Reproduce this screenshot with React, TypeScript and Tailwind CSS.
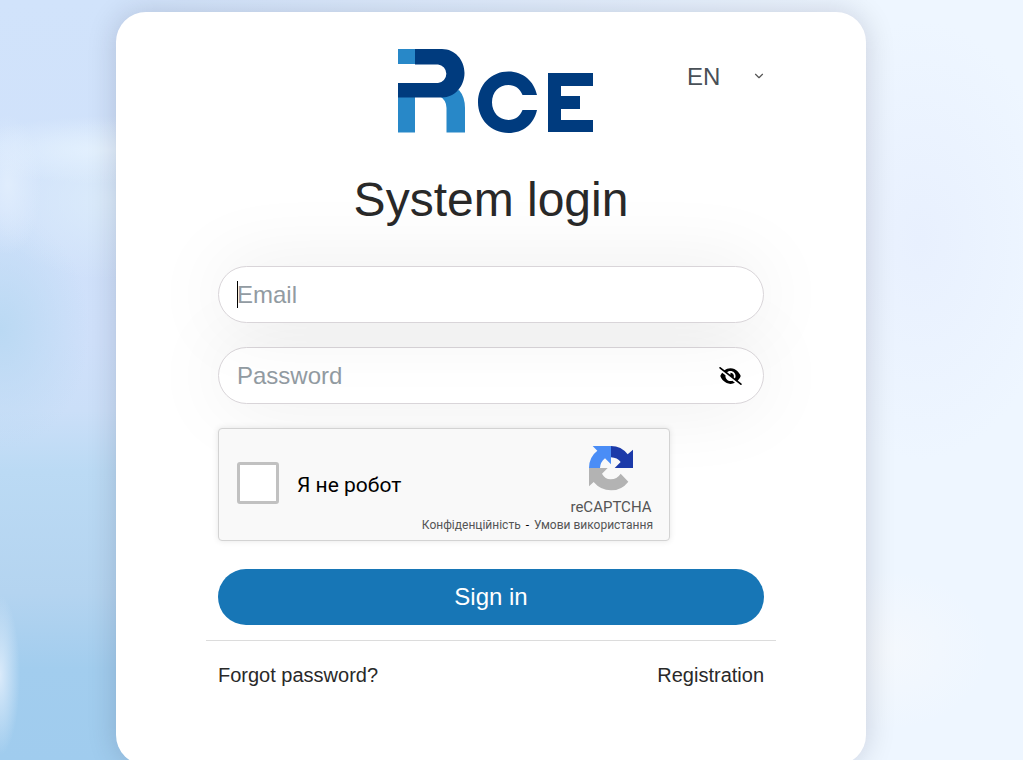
import { FaEyeSlash } from "react-icons/fa6";
import { FiChevronDown } from "react-icons/fi";

function Logo() {
  return (
    <svg width="195" height="84" viewBox="0 0 195 84" role="img" aria-label="RCE">
      <g fill="#2888c8">
        <path d="M0 0h17v15H0z" />
        <path d="M0 48h17v35.500H0z" />
        <path d="M61 41q6 7 6 18v24.500H48.500V59q0-8-7-12z" />
      </g>
      <g fill="#003b7e">
        <path d="M17 0h27c13 0 22.500 11 22.500 24S57 48.500 44 48.500H0V34h40a9.300 9.300 0 0 0 0-18.500H17z" />
        <path d="M139 46C136 32 125 22.500 110.500 22.500C93 22.500 80 36 80 53.300S93 84 110.500 84C125 84 136 75 139 61H124.500C122 67.500 117 71 110.500 71C101 71 94 63.500 94 53.300S101 36 110.500 36C117 36 122 39.500 124.500 46z" />
        <path d="M150 24h45v13h-32v10h19v13h-19v11h32v12h-45z" />
      </g>
    </svg>
  );
}

function RecaptchaLogo() {
  return (
    <svg width="46" height="46" viewBox="0 0 138 138" aria-hidden="true">
      <path fill="#1c3aa9" d="M69 3q31 0 50 25l16-14v55H80l18-18q-10-13-29-14z" />
      <path fill="#4a8df6" d="M69 3H14l14 14Q3 36 3 69h33q1-18 15-29l18 18z" />
      <path fill="#b3b3b3" d="M3 69v55l14-13q21 25 52 25 32 0 52-26L98 86q-11 17-30 17-17 0-26-17l17-17z" />
    </svg>
  );
}

function Recaptcha() {
  return (
    <div className="relative z-20 mt-6 flex h-[113px] max-w-[452px] items-center justify-between rounded border border-[#d3d3d3] bg-[#f9f9f9] pr-4 pl-[18px] shadow-[0_0_6px_rgba(0,0,0,0.1)]">
      <label className="flex shrink-0 items-center gap-[18px] pb-1 font-['Roboto',sans-serif] text-[21px] text-black">
        <input
          type="checkbox"
          className="size-[42px] appearance-none rounded-[3px] border-3 border-[#c1c1c1] bg-white"
        />
        <span className="pt-1.5">Я не робот</span>
      </label>
      <div className="-ml-8 flex flex-col items-end self-end pb-2 font-['Roboto',sans-serif] text-[#555]">
        <div className="flex w-[84px] flex-col items-center">
          <RecaptchaLogo />
          <span className="mt-[5px] text-[15px] leading-[22px]">reCAPTCHA</span>
        </div>
        <div className="text-[12px] leading-[14px] whitespace-nowrap">
          <a href="#privacy">Конфіденційність</a>
          <span className="px-0.5 text-black"> - </span>
          <a href="#terms">Умови використання</a>
        </div>
      </div>
    </div>
  );
}

const inputClass =
  "h-[57px] w-full rounded-full border border-[#d9d5d9] bg-white px-[18px] text-2xl text-[#495057] shadow-[0_0_80px_rgba(10,0,30,0.08)] outline-none placeholder:text-[#929ba2]";

export default function App() {
  return (
    <main className="h-screen overflow-hidden bg-[radial-gradient(20px_80px_at_0px_675px,#e3effcdd,transparent),radial-gradient(150px_34px_at_110px_150px,#e4f1fe,transparent),radial-gradient(34px_70px_at_8px_185px,#e0edfd,transparent),radial-gradient(120px_80px_at_110px_200px,#dbebfb,transparent),radial-gradient(90px_120px_at_0px_330px,#bad9f3,transparent),radial-gradient(100px_80px_at_890px_650px,#f4f8fd,transparent),radial-gradient(140px_220px_at_920px_240px,#e8f0fe,transparent),linear-gradient(to_right,transparent_11%,#eef6ff_85%),linear-gradient(to_bottom,#d1e3fb_0%,#cfe0fa_45%,#cbdff8_54%,#bbdaf4_62%,#b4d4f0_78%,#a2cdee_88%,#a0ccee_100%)] pt-3 pr-[41px] font-['Liberation_Sans',Arial,sans-serif]">
      <div className="mx-auto max-w-[750px] rounded-[30px] bg-white px-[90px] pt-[37px] pb-[75px] shadow-[0_0_30px_rgba(0,0,40,0.16)]">
        <form onSubmit={(e) => e.preventDefault()}>
          <div className="px-3">
            <header className="grid grid-cols-[33%_auto_1fr]">
              <div className="col-start-2">
                <Logo />
              </div>
              <div className="relative mt-2 h-10 w-[80px] justify-self-end">
                <select
                  aria-label="Language"
                  className="h-10 w-full appearance-none bg-transparent pl-[3px] text-2xl text-[#495057] outline-none"
                >
                  <option>EN</option>
                  <option>UA</option>
                </select>
                <FiChevronDown className="pointer-events-none absolute top-3 -right-0.5 size-3.5 text-[#555]" />
              </div>
            </header>

            <h1 className="mt-[38px] text-center text-5xl leading-[58px] text-[#292929]">System login</h1>

            <div className="relative z-10 mt-[37px]">
              <input type="email" aria-label="Email" placeholder="Email" className={inputClass} />
              <span className="absolute top-[15px] left-[19px] h-[27px] w-px bg-black" />
            </div>

            <div className="relative mt-6">
              <input type="password" aria-label="Password" placeholder="Password" className={inputClass} />
              <button
                type="button"
                aria-label="Show password"
                className="absolute top-0 right-0 flex h-[57px] items-center pr-[22px] pl-2 text-black"
              >
                <FaEyeSlash className="h-[18px] w-[23px]" />
              </button>
            </div>

            <Recaptcha />

            <button
              type="submit"
              className="mt-7 h-14 w-full rounded-full bg-[#1776b6] text-2xl text-white"
            >
              Sign in
            </button>
          </div>

          <hr className="mt-[15px] border-[#dcdcdc]" />

          <div className="mt-[19px] flex justify-between px-3 text-xl leading-[30px] text-[#292929]">
            <a href="#forgot">Forgot password?</a>
            <a href="#register">Registration</a>
          </div>
        </form>
      </div>
    </main>
  );
}
